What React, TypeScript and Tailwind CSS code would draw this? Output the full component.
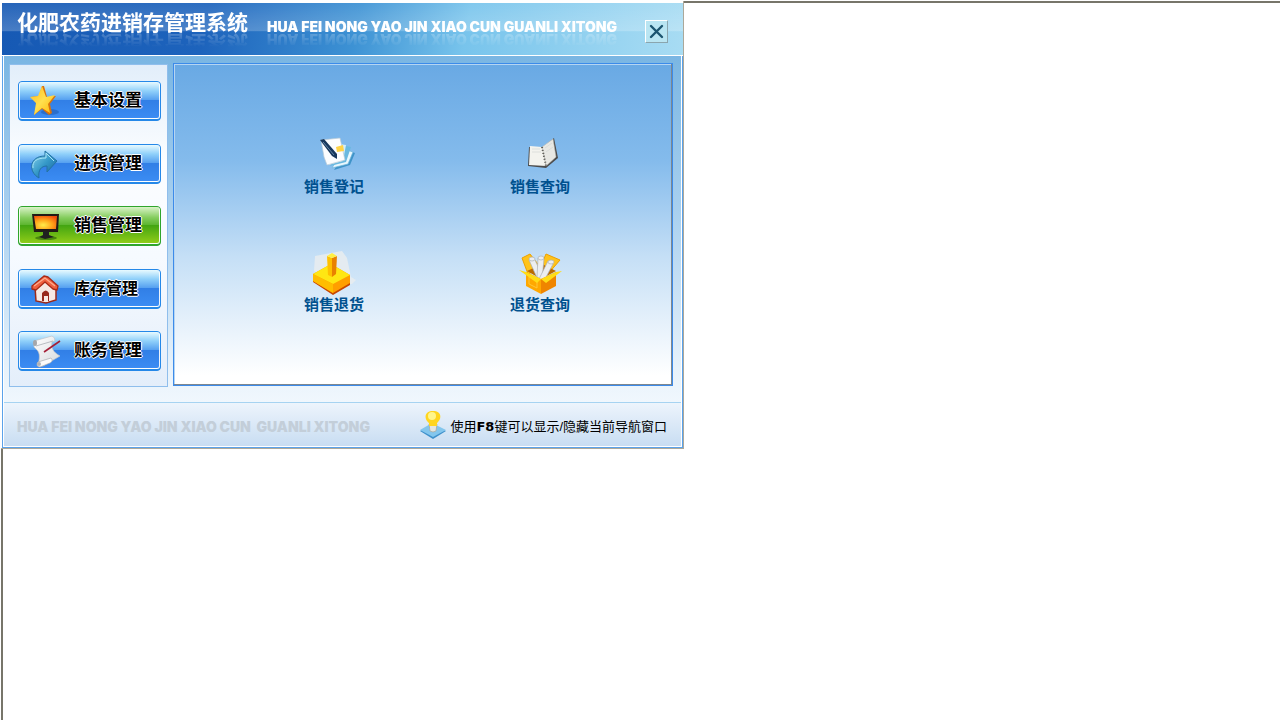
import { useState } from 'react'
import type { ReactNode } from 'react'

type TMenu = {
  id: string,
  label: string,
  size: string,
  icon: ReactNode
}

type TShortcut = {
  label: string,
  icon: ReactNode
}

const StarIcon = () => (
  <svg width="36" height="36" viewBox="0 0 36 36" aria-hidden="true">
    <defs>
      <linearGradient id="star" x1="0" y1="0" x2="1" y2="1">
        <stop offset="0" stopColor="#ffb91c" />
        <stop offset="0.5" stopColor="#ffe04f" />
        <stop offset="1" stopColor="#ffb400" />
      </linearGradient>
    </defs>
    <ellipse cx="24" cy="30" rx="9" ry="3" fill="#123f8c" opacity="0.35" />
    <path d="M18 4l3 11 9-1-6 8 2 9-3 2-7-6-8 6 3-11-6-7 8-1 3-10z" fill="#d8730c" />
    <path d="M16 4l4 11 9-2-7 9 2 9-8-5-8 7 2-12-6-6 8-1z" fill="url(#star)" />
  </svg>
)

const ArrowIcon = () => (
  <svg width="36" height="36" viewBox="0 0 36 36" aria-hidden="true">
    <defs>
      <linearGradient id="arrow" x1="0" y1="0" x2="1" y2="1">
        <stop offset="0" stopColor="#8ed6ee" />
        <stop offset="0.5" stopColor="#3599c8" />
        <stop offset="1" stopColor="#175d97" />
      </linearGradient>
    </defs>
    <path d="M13 33C2 27 3 11 19 11V6l12 10-10 11v-6c-6 0-9 4-8 12z" fill="url(#arrow)" stroke="#2472a3" strokeWidth="1" strokeLinejoin="round" />
    <path d="M7 23c-1-7 4-10 13-10V8l8 8" fill="none" stroke="#a9e4f6" strokeWidth="1" />
  </svg>
)

const MonitorIcon = () => (
  <svg width="36" height="36" viewBox="0 0 36 36" aria-hidden="true">
    <defs>
      <radialGradient id="screen" cx="0.4" cy="0.7" r="0.8">
        <stop offset="0" stopColor="#ffec4a" />
        <stop offset="0.5" stopColor="#ffa519" />
        <stop offset="1" stopColor="#f04a0b" />
      </radialGradient>
    </defs>
    <ellipse cx="20" cy="31" rx="11" ry="2" fill="#174a08" opacity="0.5" />
    <path d="M6 7h27l-1 18H8z" fill="#221b16" />
    <path d="M8 9h23l-1 13H10z" fill="url(#screen)" />
    <path d="M17 24h6v4l5 2-9 2-6-2 4-2z" fill="#202020" />
  </svg>
)

const HouseIcon = () => (
  <svg width="36" height="36" viewBox="0 0 36 36" aria-hidden="true">
    <path d="M9 17l10-8 11 8v13l-10 3-10-2z" fill="#f6e9e4" stroke="#9b2a1b" strokeWidth="1.5" />
    <path d="M16 23q4-5 7 0v8h-7z" fill="#97291d" />
    <path d="M18 26h4v6h-4z" fill="#f7e9e4" />
    <path d="M6 16L18 6l4 1 10 9-1 4-4-1-8-7-9 8-4-1z" fill="#ef6040" stroke="#a92916" strokeWidth="1.3" strokeLinejoin="round" />
    <path d="M8 16l11-8 10 8" fill="none" stroke="#ffab8c" strokeWidth="1.3" />
  </svg>
)

const ScrollIcon = () => (
  <svg width="36" height="36" viewBox="0 0 36 36" aria-hidden="true">
    <defs>
      <linearGradient id="paper" x1="0" y1="0" x2="1" y2="1">
        <stop offset="0" stopColor="#ffffff" />
        <stop offset="1" stopColor="#d6d9dc" />
      </linearGradient>
    </defs>
    <path d="M8 9L26 4q3 1 3 5l-3 1c-1 6 1 10 8 14l-17 10-5-1c2-7 2-12-1-15l-3-3z" fill="url(#paper)" stroke="#c0c3c7" strokeWidth="0.7" />
    <path d="M10 14l17-5" stroke="#b9bdc2" strokeWidth="1" />
    <ellipse cx="9" cy="11" rx="2" ry="3" fill="#a5a7aa" />
    <path d="M12 30l13-4c2 2 1 4-1 5l-10 4c-3 0-4-3-2-5z" fill="#fafafa" stroke="#a8aaad" strokeWidth="0.7" />
    <ellipse cx="13" cy="32" rx="2" ry="2" fill="#b0b2b5" />
    <path d="M18 20L34 9" stroke="#a51f37" strokeWidth="1.6" />
  </svg>
)

const RegisterIcon = () => (
  <svg width="48" height="44" viewBox="0 0 48 44" aria-hidden="true">
    <path d="M24 37l16-5 5-12-9-3z" fill="#3f93c8" />
    <path d="M22 35l16-4 5-12-9-3z" fill="#e8f7fd" stroke="#6bb5db" strokeWidth="0.7" />
    <path d="M20 33l16-4 5-15-10-2z" fill="#69b9e0" />
    <path d="M18 32l15-4 3-16-7-1z" fill="#d3edf8" />
    <path d="M11 7l19-2 5 22-18 5-3-8z" fill="#fcfdff" stroke="#b9cad5" strokeWidth="0.7" />
    <path d="M26 14l7-2 1 6-7 1z" fill="#ffd348" />
    <path d="M10 7l4-1 13 15v5l-5-3z" fill="#17375c" />
    <path d="M13 9l11 13" stroke="#6384a5" strokeWidth="1" />
  </svg>
)

const BookIcon = () => (
  <svg width="48" height="44" viewBox="0 0 48 44" aria-hidden="true">
    <path d="M13 14l13 1 12-10 4 20-12 10-18-2z" fill="#4c4c4c" />
    <path d="M14 13l12 1 4 19-17-1z" fill="#f3f3ee" />
    <path d="M26 14L37 6l3 18-10 9z" fill="#e8e8e3" stroke="#bcbcb4" strokeWidth="0.5" />
    <path d="M16 16h8M16 19h9M29 15l7-5M30 19l7-5" stroke="#d4d7d4" strokeWidth="0.7" />
    <path d="M26 14l4 19" stroke="#55544f" strokeWidth="2" strokeDasharray="1 2" />
  </svg>
)

const ReturnIcon = () => (
  <svg width="48" height="44" viewBox="0 1 48 44" aria-hidden="true">
    <path d="M5 6l27-5 5 7 4 19 5 3-4 4-17 1L4 21z" fill="#e7ecf0" opacity="0.9" />
    <path d="M3 29l20 13 17-10v3L23 45 3 32z" fill="#c84700" />
    <path d="M3 24l18-10 19 11v8L23 43 3 31z" fill="#ff9f00" />
    <path d="M3 24l18-10 19 11-17 9z" fill="#ffe713" />
    <path d="M3 24l20 10v9L3 31z" fill="#ffbd00" />
    <path d="M17 6l5 2v19l-4-2z" fill="#ffc000" />
    <path d="M22 8l5-2-1 18-4 3z" fill="#e98200" />
    <path d="M17 6l5-3 5 3-5 2z" fill="#fff044" />
  </svg>
)

const BoxIcon = () => (
  <svg width="48" height="44" viewBox="0 1 48 44" aria-hidden="true">
    <path d="M6 8l8-4 11 14-13 6zM24 18L30 4l14 6-12 14z" fill="#ffc31a" stroke="#eda000" />
    <path d="M11 21l15-7 14 7-15 8z" fill="#bb6c00" />
    <g fill="#eceef0" stroke="#aab0b5" strokeWidth="0.7">
      <path d="M13 10l5-2 9 19-5 3z" />
      <path d="M22 8l6 1-2 21-5-3z" />
      <path d="M32 11l5 3-9 17-5-2z" />
      <ellipse cx="16" cy="9" rx="3" ry="2" />
      <ellipse cx="25" cy="8" rx="3" ry="2" />
      <ellipse cx="35" cy="12" rx="3" ry="2" />
    </g>
    <path d="M10 22l15 7v15L10 36z" fill="#ffa800" />
    <path d="M25 29l15-7v14L25 44z" fill="#ef8500" />
    <path d="M13 27l8 4v7l-8-4z" fill="none" stroke="#ffc637" />
    <path d="M10 22l15 7-4 4L3 20zM40 22l-15 7 5 4 16-12z" fill="#ffdd16" />
  </svg>
)

const BulbIcon = () => (
  <svg width="28" height="30" viewBox="0 0 28 30" aria-hidden="true">
    <path d="M1 21l12-7 14 7-13 8z" fill="#3f91cb" />
    <path d="M1 20l12-7 14 7-13 7z" fill="#83c6ed" />
    <path d="M10 14h8l-1 7q-3 2-6 0z" fill="#e4e5df" stroke="#a3a59c" strokeWidth="0.7" />
    <path d="M14 1C5 1 5 9 10 13v3h8v-3c5-4 5-12-4-12z" fill="#ffd51f" />
    <ellipse cx="13" cy="6" rx="4" ry="4" fill="#fff58c" />
  </svg>
)

const MENUS: TMenu[] = [
  { id: 'basic', label: '基本设置', size: 'text-[17px]', icon: <StarIcon /> },
  { id: 'purchase', label: '进货管理', size: 'text-[17px]', icon: <ArrowIcon /> },
  { id: 'sales', label: '销售管理', size: 'text-[17px]', icon: <MonitorIcon /> },
  { id: 'stock', label: '库存管理', size: 'text-[16px]', icon: <HouseIcon /> },
  { id: 'account', label: '账务管理', size: 'text-[17px]', icon: <ScrollIcon /> }
]

const SHORTCUTS: TShortcut[] = [
  { label: '销售登记', icon: <RegisterIcon /> },
  { label: '销售查询', icon: <BookIcon /> },
  { label: '销售退货', icon: <ReturnIcon /> },
  { label: '退货查询', icon: <BoxIcon /> }
]

const MenuButton = (props: { menu: TMenu, active: boolean, onSelect: () => void }) => {
  const { menu, active, onSelect } = props

  return (
    <button
      type="button"
      aria-pressed={active}
      onClick={onSelect}
      className={`h-10 w-full rounded-[4px] border ${active
        ? 'border-[#2fa52c] bg-[#2fa52c] pb-px'
        : 'border-[#2588e8] bg-[#2588e8] pb-px'
      }`}
    >
      <span
        className={`flex h-full items-center gap-3 rounded-[3px] border border-t-0 border-white/90 pl-1.5 ${active
          ? 'bg-[linear-gradient(#d9f3c8_0%,#83cc5c_30%,#5cb52f_50%,#43a512_51%,#8fcc18_100%)]'
          : 'bg-[linear-gradient(#e8faff_0%,#8fd0fa_25%,#559ff0_50%,#317fe6_51%,#3b8cf3_100%)]'
        }`}
      >
        {menu.icon}
        <span className={`${menu.size} pt-0.5 leading-5 font-bold whitespace-nowrap text-black [text-shadow:1px_0_0_#fff,-1px_0_0_#fff,0_1px_0_#fff,0_-1px_0_#fff]`}>
          {menu.label}
        </span>
      </span>
    </button>
  )
}

const Header = () => (
  <header className="h-[53px] border-b border-white bg-[linear-gradient(100deg,#1659b4_0%,#1d63bc_30%,#3d92d4_52%,#78c4ec_68%,#a8dcf3_100%)]">
    <div className="flex h-full items-start bg-[linear-gradient(#ffffff11_0%,#ffffff38_54%,#ffffff00_55%)] pl-[15px]">
      <h1 className="w-[250px] pt-2 text-[21px] leading-6 font-bold whitespace-nowrap text-white [-webkit-box-reflect:below_-4px_linear-gradient(transparent_50%,#ffffff44)]">
        化肥农药进销存管理系统
      </h1>
      <p className="grow pt-4 font-[Inter] text-[14px] leading-4 font-black whitespace-nowrap text-white [-webkit-box-reflect:below_-4px_linear-gradient(transparent_50%,#ffffff44)]">
        HUA FEI NONG YAO JIN XIAO CUN GUANLI XITONG
      </p>
      <button
        type="button"
        aria-label="关闭"
        className="mt-[17px] mr-[15px] flex size-[23px] items-center justify-center border border-t-white border-r-[#8aa5ae] border-b-[#8aa5ae] border-l-white bg-[#b9e5f2]"
      >
        <svg width="15" height="15" viewBox="0 0 15 15" aria-hidden="true">
          <path d="M2 2l11 11M13 2L2 13" stroke="#1c5570" strokeWidth="2.4" strokeLinecap="round" />
        </svg>
      </button>
    </div>
  </header>
)

const App = () => {
  const [current, setCurrent] = useState('sales')

  return (
    <div className="min-h-screen bg-white pt-px pl-px font-['Liberation_Sans','Noto_Sans_CJK_SC',sans-serif]">
      <div className="min-h-[calc(100vh-1px)] border-t-2 border-l-2 border-[#77756a]">
        <main className="-mt-0.5 -ml-0.5 w-[683px] border-r border-b border-[#aca899] bg-white pt-0.5 pl-px">
          <Header />

          <div className="border-x border-b border-[#5ba2ea]">
            <div className="border-x border-b border-white">
              <div className="flex gap-[5px] bg-[linear-gradient(#7ab6e3_0%,#a9d0ef_45%,#e7f2fb_90%,#f0f7fd_100%)] pt-2 pr-2 pb-[15px] pl-[5px]">
                <nav className="flex h-[323px] w-[159px] flex-col justify-between border border-[#8fbeec] bg-[linear-gradient(#e2eefa_0%,#fbfdff_30%,#f6faff_60%,#e4eefa_100%)] pt-4 pr-1.5 pb-[15px] pl-2">
                  {MENUS.map((menu) => (
                    <MenuButton
                      key={menu.id}
                      menu={menu}
                      active={menu.id === current}
                      onSelect={() => setCurrent(menu.id)}
                    />
                  ))}
                </nav>

                <section className="-mt-px grid h-[323px] grow grid-cols-2 content-start gap-y-[54px] border border-[#3c8bea] bg-[linear-gradient(#69a9e4_0%,#84bbec_30%,#c5dff6_60%,#ffffff_97%)] pt-[69px] pr-[29px] pl-[57px] shadow-[inset_-1px_-1px_0_#7d8790,inset_1px_1px_0_#b5d5f2]">
                  {SHORTCUTS.map((item) => (
                    <button key={item.label} type="button" className="flex flex-col items-center">
                      {item.icon}
                      <span className="text-[15px] leading-5 font-bold text-[#00518f]">{item.label}</span>
                    </button>
                  ))}
                </section>
              </div>

              <footer className="flex h-11 items-center justify-between border-t border-[#a6d3f1] bg-[linear-gradient(#edf4fc,#c8ddf2)] pr-3.5 pl-[13px]">
                <p className="pt-1 font-[Inter] text-[14px] leading-4 font-black whitespace-pre text-[#c3ced9]">
                  HUA FEI NONG YAO JIN XIAO CUN  GUANLI XITONG
                </p>
                <p className="flex items-center gap-[3px] text-[13px] leading-4 whitespace-nowrap text-black">
                  <BulbIcon />
                  <span className="pt-1">
                    使用<b className="font-['DejaVu_Sans']">F8</b>键可以显示/隐藏当前导航窗口
                  </span>
                </p>
              </footer>
            </div>
          </div>
        </main>
      </div>
    </div>
  )
}

export default App
